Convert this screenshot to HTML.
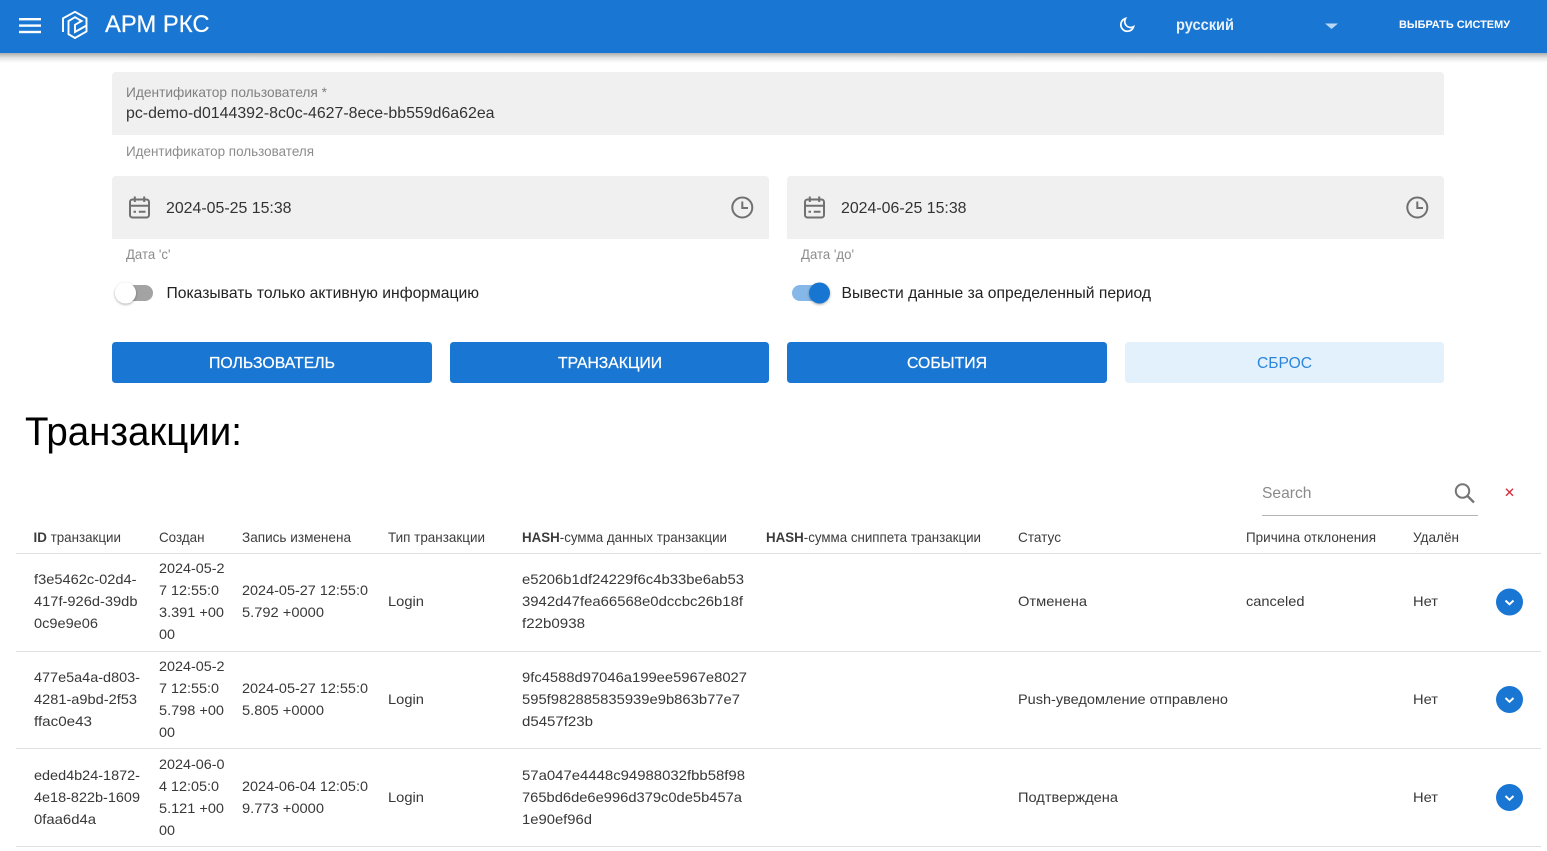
<!DOCTYPE html>
<html lang="ru"><head><meta charset="utf-8"><title>АРМ РКС</title>
<style>
html,body{margin:0;padding:0;background:#fff;width:1547px;height:851px;overflow:hidden}
svg{display:block;position:absolute;left:0;top:0}
text{font-family:"Liberation Sans",sans-serif;font-size:14px;fill:#383838}
.g{fill:rgba(0,0,0,.54)}
.f{font-size:16px;fill:#333}
.h{font-size:14px;fill:#8c8c8c}
.b{font-size:16px;fill:#fff;stroke:#fff;stroke-width:.25}
.t{fill:#3c3c3c}
.w{fill:#fff}
</style></head><body>
<svg width="1547" height="851" viewBox="0 0 1547 851" xmlns="http://www.w3.org/2000/svg">
<defs>
<linearGradient id="sh" x1="0" y1="0" x2="0" y2="1"><stop offset="0" stop-color="#000" stop-opacity=".32"/><stop offset=".5" stop-color="#000" stop-opacity=".1"/><stop offset="1" stop-color="#000" stop-opacity="0"/></linearGradient>
<filter id="s" x="-50%" y="-50%" width="200%" height="200%"><feDropShadow dx="0" dy="1" stdDeviation="1.3" flood-color="#000" flood-opacity=".35"/></filter>
</defs>
<rect y="53" width="1547" height="10" fill="url(#sh)"/>
<rect width="1547" height="53" fill="#1976d2"/>
<g fill="#fff"><rect x="19" y="18" width="22" height="2.4"/><rect x="19" y="24.4" width="22" height="2.4"/><rect x="19" y="30.8" width="22" height="2.4"/></g>
<g fill="none" stroke="#fff" stroke-width="1.9">
<path d="M63 32V18.300L75 11.800L86.500 18.300V31.400L75 38L68.500 34.200V21L75 17.200L81.600 21L75 24.800V32L86.500 25.500"/>
</g>
<text x="105" y="32" textLength="104.500" lengthAdjust="spacingAndGlyphs" class="w" style="font-size:24px;stroke:#fff;stroke-width:.2">АРМ РКС</text>
<path d="M1125.500 18.500a6.500 6.500 0 1 0 8 8.300a6 6 0 0 1-8-8.300z" fill="none" stroke="#fff" stroke-width="1.700"/>
<text x="1176" y="30" textLength="58" lengthAdjust="spacingAndGlyphs" class="w" style="font-size:16px;font-weight:700;fill:#e8f1fb">русский</text>
<path d="M1325 23.500h13l-6.500 5.500z" fill="#fff" fill-opacity=".7"/>
<text x="1399" y="28" textLength="111" lengthAdjust="spacingAndGlyphs" class="w" style="font-size:11px;font-weight:700">ВЫБРАТЬ СИСТЕМУ</text>

<path d="M116 72H1440a4 4 0 0 1 4 4V135H112V76a4 4 0 0 1 4-4z" fill="#f0f0f0"/>
<text x="126" y="97" textLength="201" lengthAdjust="spacingAndGlyphs" class="g" style="font-size:14px;fill:#808080">Идентификатор пользователя *</text>
<text x="126" y="118" textLength="368.500" lengthAdjust="spacingAndGlyphs" class="f">pc-demo-d0144392-8c0c-4627-8ece-bb559d6a62ea</text>
<text x="126" y="156" textLength="188" lengthAdjust="spacingAndGlyphs" class="h">Идентификатор пользователя</text>

<path d="M116 176H765a4 4 0 0 1 4 4V239H112V180a4 4 0 0 1 4-4z" fill="#f0f0f0"/>
<path d="M791 176H1440a4 4 0 0 1 4 4V239H787V180a4 4 0 0 1 4-4z" fill="#f0f0f0"/>
<g id="ic" fill="none" stroke="#707070" stroke-width="2">
<rect x="130" y="199.500" width="19" height="18" rx="2.500"/><path d="M130 205.800H149M134.800 196.500V202M144.200 196.500V202"/><path d="M133.500 211.700H136M138.800 211.700H145.500"/>
<circle cx="742.300" cy="207.500" r="10"/><path d="M742.300 201.500V208H748"/>
<rect x="805" y="199.500" width="19" height="18" rx="2.500"/><path d="M805 205.800H824M809.800 196.500V202M819.200 196.500V202"/><path d="M808.500 211.700H811M813.800 211.700H820.500"/>
<circle cx="1417.300" cy="207.500" r="10"/><path d="M1417.300 201.500V208H1423"/>
</g>
<text x="166" y="213" textLength="125.500" lengthAdjust="spacingAndGlyphs" class="f">2024-05-25 15:38</text>
<text x="841" y="213" textLength="125.500" lengthAdjust="spacingAndGlyphs" class="f">2024-06-25 15:38</text>
<text x="126" y="259" textLength="44.500" lengthAdjust="spacingAndGlyphs" class="h">Дата 'с'</text>
<text x="801" y="259" textLength="53" lengthAdjust="spacingAndGlyphs" class="h">Дата 'до'</text>

<rect x="117" y="285" width="36" height="16" rx="8" fill="#a3a3a3"/>
<circle cx="125.500" cy="293" r="10.500" fill="#fff" filter="url(#s)"/>
<text x="166.500" y="298" textLength="312.500" lengthAdjust="spacingAndGlyphs" class="f" style="fill:#222">Показывать только активную информацию</text>
<rect x="792" y="285" width="36" height="16" rx="8" fill="#85b8e8"/>
<circle cx="819.500" cy="293" r="10.500" fill="#1976d2" filter="url(#s)"/>
<text x="841.500" y="298" textLength="309.500" lengthAdjust="spacingAndGlyphs" class="f" style="fill:#222">Вывести данные за определенный период</text>

<rect x="112" y="342" width="320" height="41" rx="3.500" fill="#1976d2"/>
<rect x="450" y="342" width="319" height="41" rx="3.500" fill="#1976d2"/>
<rect x="787" y="342" width="320" height="41" rx="3.500" fill="#1976d2"/>
<rect x="1125" y="342" width="319" height="41" rx="3.500" fill="#e3f1fc"/>
<text x="209" y="368" textLength="126" lengthAdjust="spacingAndGlyphs" class="b">ПОЛЬЗОВАТЕЛЬ</text>
<text x="558" y="368" textLength="104" lengthAdjust="spacingAndGlyphs" class="b">ТРАНЗАКЦИИ</text>
<text x="907" y="368" textLength="80" lengthAdjust="spacingAndGlyphs" class="b">СОБЫТИЯ</text>
<text x="1257" y="368" textLength="55" lengthAdjust="spacingAndGlyphs" class="b" style="fill:#2a86dc;stroke:none">СБРОС</text>

<text x="25" y="445" textLength="217" lengthAdjust="spacingAndGlyphs" style="font-size:40px;fill:#000">Транзакции:</text>

<text x="1262" y="498" textLength="49.500" lengthAdjust="spacingAndGlyphs" style="font-size:16px;fill:#8a8a8a">Search</text>
<rect x="1262" y="515" width="216" height="1" fill="#b5b5b5"/>
<g fill="none" stroke="#757575" stroke-width="2"><circle cx="1462.500" cy="491" r="6.700"/><path d="M1467.500 496L1474 502.500" stroke-width="2.300"/></g>
<path d="M1506 488.800L1513 495.800M1513 488.800L1506 495.800" stroke="#d32f3f" stroke-width="1.400" fill="none"/>

<g class="th">
<text x="33.500" y="542" textLength="87.500" lengthAdjust="spacingAndGlyphs" class="t"><tspan style="font-weight:700">ID</tspan> транзакции</text>
<text x="159" y="542" textLength="45.500" lengthAdjust="spacingAndGlyphs" class="t">Создан</text>
<text x="242" y="542" textLength="109" lengthAdjust="spacingAndGlyphs" class="t">Запись изменена</text>
<text x="388" y="542" textLength="97" lengthAdjust="spacingAndGlyphs" class="t">Тип транзакции</text>
<text x="522" y="542" textLength="205" lengthAdjust="spacingAndGlyphs" class="t"><tspan style="font-weight:700">HASH</tspan>-сумма данных транзакции</text>
<text x="766" y="542" textLength="215" lengthAdjust="spacingAndGlyphs" class="t"><tspan style="font-weight:700">HASH</tspan>-сумма сниппета транзакции</text>
<text x="1018" y="542" textLength="43" lengthAdjust="spacingAndGlyphs" class="t">Статус</text>
<text x="1246" y="542" textLength="130" lengthAdjust="spacingAndGlyphs" class="t">Причина отклонения</text>
<text x="1413" y="542" textLength="46" lengthAdjust="spacingAndGlyphs" class="t">Удалён</text>
</g>
<g fill="#e0e0e0"><rect x="16" y="553" width="1525" height="1"/><rect x="16" y="651" width="1525" height="1"/><rect x="16" y="748" width="1525" height="1"/><rect x="16" y="846" width="1525" height="1"/></g>

<!-- row 1 -->
<text x="34" y="584" textLength="102.500" lengthAdjust="spacingAndGlyphs">f3e5462c-02d4-</text>
<text x="34" y="606" textLength="103.500" lengthAdjust="spacingAndGlyphs">417f-926d-39db</text>
<text x="34" y="628" textLength="64" lengthAdjust="spacingAndGlyphs">0c9e9e06</text>
<text x="159" y="573" textLength="65.500" lengthAdjust="spacingAndGlyphs">2024-05-2</text>
<text x="159" y="595" textLength="60" lengthAdjust="spacingAndGlyphs">7 12:55:0</text>
<text x="159" y="617" textLength="65" lengthAdjust="spacingAndGlyphs">3.391 +00</text>
<text x="159" y="639" textLength="16" lengthAdjust="spacingAndGlyphs">00</text>
<text x="242" y="595" textLength="126" lengthAdjust="spacingAndGlyphs">2024-05-27 12:55:0</text>
<text x="242" y="617" textLength="82" lengthAdjust="spacingAndGlyphs">5.792 +0000</text>
<text x="388" y="606" textLength="36" lengthAdjust="spacingAndGlyphs">Login</text>
<text x="522" y="584" textLength="222" lengthAdjust="spacingAndGlyphs">e5206b1df24229f6c4b33be6ab53</text>
<text x="522" y="606" textLength="221" lengthAdjust="spacingAndGlyphs">3942d47fea66568e0dccbc26b18f</text>
<text x="522" y="628" textLength="63" lengthAdjust="spacingAndGlyphs">f22b0938</text>
<text x="1018" y="606" textLength="69" lengthAdjust="spacingAndGlyphs">Отменена</text>
<text x="1246" y="606" textLength="58.500" lengthAdjust="spacingAndGlyphs">canceled</text>
<text x="1413" y="606" textLength="25" lengthAdjust="spacingAndGlyphs">Нет</text>

<!-- row 2 -->
<text x="34" y="682" textLength="106" lengthAdjust="spacingAndGlyphs">477e5a4a-d803-</text>
<text x="34" y="704" textLength="103" lengthAdjust="spacingAndGlyphs">4281-a9bd-2f53</text>
<text x="34" y="726" textLength="58" lengthAdjust="spacingAndGlyphs">ffac0e43</text>
<text x="159" y="671" textLength="65.500" lengthAdjust="spacingAndGlyphs">2024-05-2</text>
<text x="159" y="693" textLength="60" lengthAdjust="spacingAndGlyphs">7 12:55:0</text>
<text x="159" y="715" textLength="65" lengthAdjust="spacingAndGlyphs">5.798 +00</text>
<text x="159" y="737" textLength="16" lengthAdjust="spacingAndGlyphs">00</text>
<text x="242" y="693" textLength="126" lengthAdjust="spacingAndGlyphs">2024-05-27 12:55:0</text>
<text x="242" y="715" textLength="82" lengthAdjust="spacingAndGlyphs">5.805 +0000</text>
<text x="388" y="704" textLength="36" lengthAdjust="spacingAndGlyphs">Login</text>
<text x="522" y="682" textLength="225" lengthAdjust="spacingAndGlyphs">9fc4588d97046a199ee5967e8027</text>
<text x="522" y="704" textLength="218" lengthAdjust="spacingAndGlyphs">595f982885835939e9b863b77e7</text>
<text x="522" y="726" textLength="71" lengthAdjust="spacingAndGlyphs">d5457f23b</text>
<text x="1018" y="704" textLength="210" lengthAdjust="spacingAndGlyphs">Push-уведомление отправлено</text>
<text x="1413" y="704" textLength="25" lengthAdjust="spacingAndGlyphs">Нет</text>

<!-- row 3 -->
<text x="34" y="780" textLength="106" lengthAdjust="spacingAndGlyphs">eded4b24-1872-</text>
<text x="34" y="802" textLength="106" lengthAdjust="spacingAndGlyphs">4e18-822b-1609</text>
<text x="34" y="824" textLength="62" lengthAdjust="spacingAndGlyphs">0faa6d4a</text>
<text x="159" y="769" textLength="65.500" lengthAdjust="spacingAndGlyphs">2024-06-0</text>
<text x="159" y="791" textLength="60" lengthAdjust="spacingAndGlyphs">4 12:05:0</text>
<text x="159" y="813" textLength="65" lengthAdjust="spacingAndGlyphs">5.121 +00</text>
<text x="159" y="835" textLength="16" lengthAdjust="spacingAndGlyphs">00</text>
<text x="242" y="791" textLength="126" lengthAdjust="spacingAndGlyphs">2024-06-04 12:05:0</text>
<text x="242" y="813" textLength="82" lengthAdjust="spacingAndGlyphs">9.773 +0000</text>
<text x="388" y="802" textLength="36" lengthAdjust="spacingAndGlyphs">Login</text>
<text x="522" y="780" textLength="223" lengthAdjust="spacingAndGlyphs">57a047e4448c94988032fbb58f98</text>
<text x="522" y="802" textLength="220" lengthAdjust="spacingAndGlyphs">765bd6de6e996d379c0de5b457a</text>
<text x="522" y="824" textLength="70" lengthAdjust="spacingAndGlyphs">1e90ef96d</text>
<text x="1018" y="802" textLength="100" lengthAdjust="spacingAndGlyphs">Подтверждена</text>
<text x="1413" y="802" textLength="25" lengthAdjust="spacingAndGlyphs">Нет</text>

<g>
<circle cx="1509.500" cy="602" r="13.500" fill="#1976d2"/><path d="M1505.500 600.500L1509.500 604.300L1513.500 600.500" fill="none" stroke="#fff" stroke-width="2"/>
<circle cx="1509.500" cy="699.500" r="13.500" fill="#1976d2"/><path d="M1505.500 698L1509.500 701.800L1513.500 698" fill="none" stroke="#fff" stroke-width="2"/>
<circle cx="1509.500" cy="797.500" r="13.500" fill="#1976d2"/><path d="M1505.500 796L1509.500 799.800L1513.500 796" fill="none" stroke="#fff" stroke-width="2"/>
</g>
</svg>
</body></html>
